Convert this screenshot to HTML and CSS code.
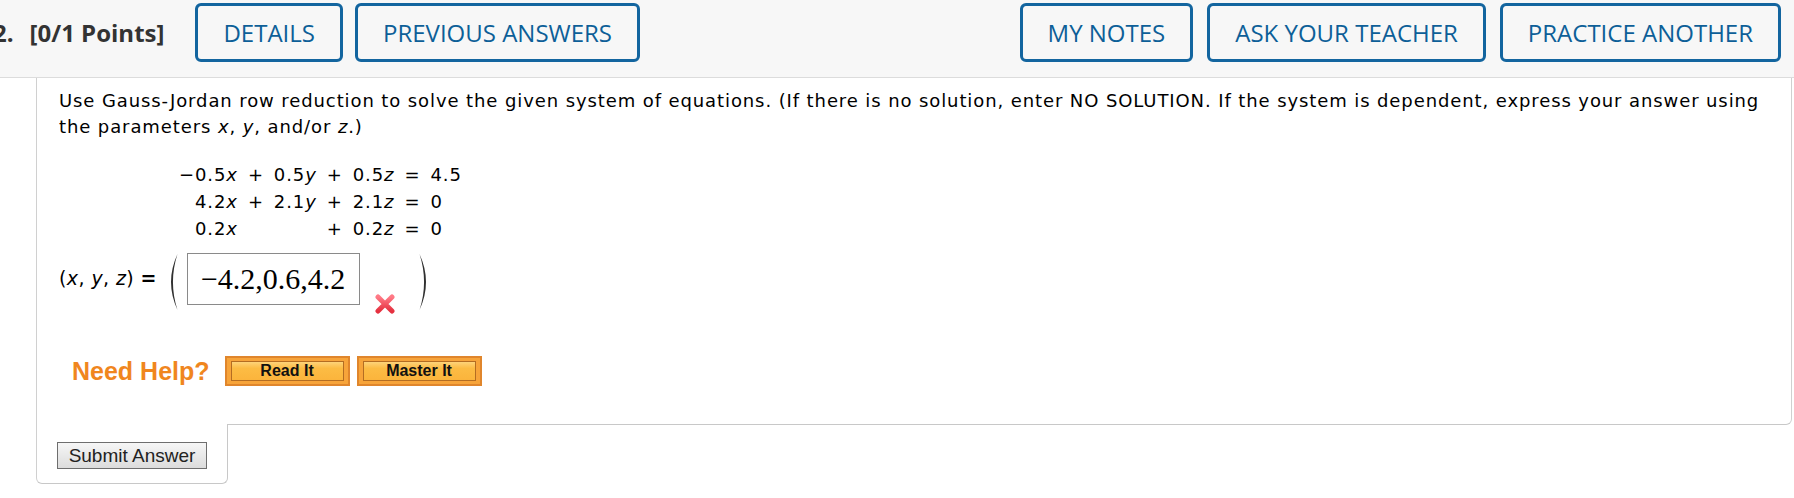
FILE: index.html
```html
<!DOCTYPE html>
<html>
<head>
<meta charset="utf-8">
<link rel="stylesheet" href="styles.css">
</head>
<body>
<div class="header">
  <div class="qnum"><span class="num">2.</span>[0/1 Points]</div>
  <div class="btn-group">
    <button class="hbtn">DETAILS</button>
    <button class="hbtn">PREVIOUS ANSWERS</button>
  </div>
  <div class="spacer"></div>
  <div class="btn-group right">
    <button class="hbtn">MY NOTES</button>
    <button class="hbtn">ASK YOUR TEACHER</button>
    <button class="hbtn">PRACTICE ANOTHER</button>
  </div>
</div>

<div class="question">
  <p class="prompt">Use Gauss-Jordan row reduction to solve the given system of equations. (If there is no solution, enter NO SOLUTION. If the system is dependent, express your answer using the parameters <i>x</i>, <i>y</i>, and/or <i>z</i>.)</p>

  <div class="eqs">
    <span class="c">−0.5<i>x</i></span><span class="op">+</span><span class="c">0.5<i>y</i></span><span class="op">+</span><span class="c">0.5<i>z</i></span><span class="op">=</span><span class="r">4.5</span>
    <span class="c">4.2<i>x</i></span><span class="op">+</span><span class="c">2.1<i>y</i></span><span class="op">+</span><span class="c">2.1<i>z</i></span><span class="op">=</span><span class="r">0</span>
    <span class="c">0.2<i>x</i></span><span class="op"></span><span class="c"></span><span class="op">+</span><span class="c">0.2<i>z</i></span><span class="op">=</span><span class="r">0</span>
  </div>

  <div class="answer">
    <span class="label">(<i>x</i>, <i>y</i>, <i>z</i>) <b>=</b></span>
    <svg class="paren" width="14" height="58" viewBox="0 0 14 58"><path d="M12.5 1 Q-0.5 29 12.5 57 Q3.4 29 12.5 1 Z" fill="#303030"/></svg>
    <span class="ansbox">−4.2,0.6,4.2</span>
    <svg class="wrong" width="22" height="20" viewBox="0 0 22 20"><defs><linearGradient id="g" x1="0" y1="0" x2="0" y2="1"><stop offset="0" stop-color="#ff7a86"/><stop offset="1" stop-color="#e5303f"/></linearGradient></defs><path d="M4 3 L18 17 M18 3 L4 17" stroke="url(#g)" stroke-width="5" stroke-linecap="round"/></svg>
    <svg class="paren" width="14" height="58" viewBox="0 0 14 58"><path d="M1.5 1 Q14.5 29 1.5 57 Q10.6 29 1.5 1 Z" fill="#303030"/></svg>
  </div>

  <div class="help">
    <span class="need">Need Help?</span>
    <button class="helpbtn"><span>Read It</span></button>
    <button class="helpbtn"><span>Master It</span></button>
  </div>
</div>
<div class="submit-tab">
  <button class="submit">Submit Answer</button>
</div>
</body>
</html>
```

FILE: styles.css
```css
html, body {
  margin: 0;
  padding: 0;
  background: #fff;
}
body {
  width: 1794px;
  overflow: hidden;
}
.header {
  display: flex;
  align-items: center;
  height: 59px;
  padding: 3px 13px 15px 0;
  background: #f7f7f7;
  border-bottom: 1px solid #dcdcdc;
  font-family: "Open Sans", sans-serif;
}
.qnum {
  font-weight: 700;
  font-size: 24px;
  color: #333;
  margin-left: -7px;
  margin-right: 31px;
  white-space: nowrap;
}
.qnum .num {
  margin-right: 16px;
}
.btn-group {
  display: flex;
  gap: 12px;
}
.btn-group.right {
  gap: 14px;
}
.spacer {
  flex: 1;
}
.hbtn {
  height: 59px;
  box-sizing: border-box;
  border: 3px solid #13659f;
  border-radius: 6px;
  background: #f7f7f7;
  color: #0d5f98;
  font-family: "Open Sans", sans-serif;
  font-size: 24px;
  font-weight: 500;
  padding: 0 25px;
  white-space: nowrap;
}
.question {
  margin: 0 2px 0 36px;
  border-left: 1px solid #d0d0d0;
  border-right: 1px solid #d0d0d0;
  border-bottom: 1px solid #c8c8c8;
  border-bottom-right-radius: 6px;
  padding: 10px 20px 38px 22px;
  font-family: "DejaVu Sans", Verdana, sans-serif;
  font-size: 18px;
  letter-spacing: 0.9px;
  color: #000;
}
.prompt {
  margin: 0;
  line-height: 26px;
  max-width: 1712px;
}
.eqs {
  display: grid;
  grid-template-columns: auto auto auto auto auto auto auto;
  justify-content: start;
  margin: 21px 0 0 120px;
  line-height: 27px;
}
.eqs .c {
  text-align: right;
}
.eqs .op {
  text-align: center;
  padding: 0 10px;
}
.eqs .r {
  text-align: left;
}
.answer {
  display: flex;
  align-items: flex-start;
  margin-top: 11px;
  height: 60px;
}
.answer .label {
  margin-top: 14px;
  font-size: 19px;
  letter-spacing: 0.4px;
  margin-right: 8px;
}
.answer .label b {
  font-weight: 700;
}
.paren {
  display: block;
}
.ansbox {
  margin-left: 8px;
  height: 50px;
  border: 1px solid #8a8a8a;
  font-family: "Liberation Serif", serif;
  font-size: 30px;
  letter-spacing: 0;
  line-height: 50px;
  padding-left: 13px;
  box-sizing: content-box;
  width: 158px;
}
.wrong {
  display: block;
  margin: 41px 22px 0 14px;
}
.help {
  display: flex;
  align-items: center;
  margin-top: 43px;
  padding-left: 13px;
  letter-spacing: 0;
}
.need {
  font-family: "Liberation Sans", Arial, sans-serif;
  font-weight: 700;
  font-size: 25px;
  color: #f0861e;
  margin-right: 15px;
}
.helpbtn {
  box-sizing: border-box;
  width: 125px;
  height: 30px;
  margin-right: 7px;
  padding: 3px 4px;
  border: 2px solid #e0862c;
  background: #f7a43a;
  font-family: "Liberation Sans", Arial, sans-serif;
  font-weight: 700;
  font-size: 16px;
  color: #111;
  cursor: pointer;
}
.helpbtn span {
  display: block;
  height: 18px;
  line-height: 18px;
  border: 1px solid #b46d22;
  background: linear-gradient(#fdd37a, #fcbc44 35%, #fbb43c);
}
.submit-tab {
  width: 192px;
  margin: -1px 0 0 36px;
  background: #fff;
  border-left: 1px solid #d0d0d0;
  border-right: 1px solid #c8c8c8;
  border-bottom: 1px solid #c8c8c8;
  border-radius: 0 0 6px 6px;
  padding: 18px 0 0 20px;
  box-sizing: border-box;
  height: 60px;
}
.submit {
  display: block;
  height: 27px;
  width: 150px;
  border: 1px solid #6e6e6e;
  background: linear-gradient(#f6f6f6, #dcdcdc);
  font-family: "Liberation Sans", Arial, sans-serif;
  font-size: 19px;
  color: #222;
  padding: 0;
}
```
